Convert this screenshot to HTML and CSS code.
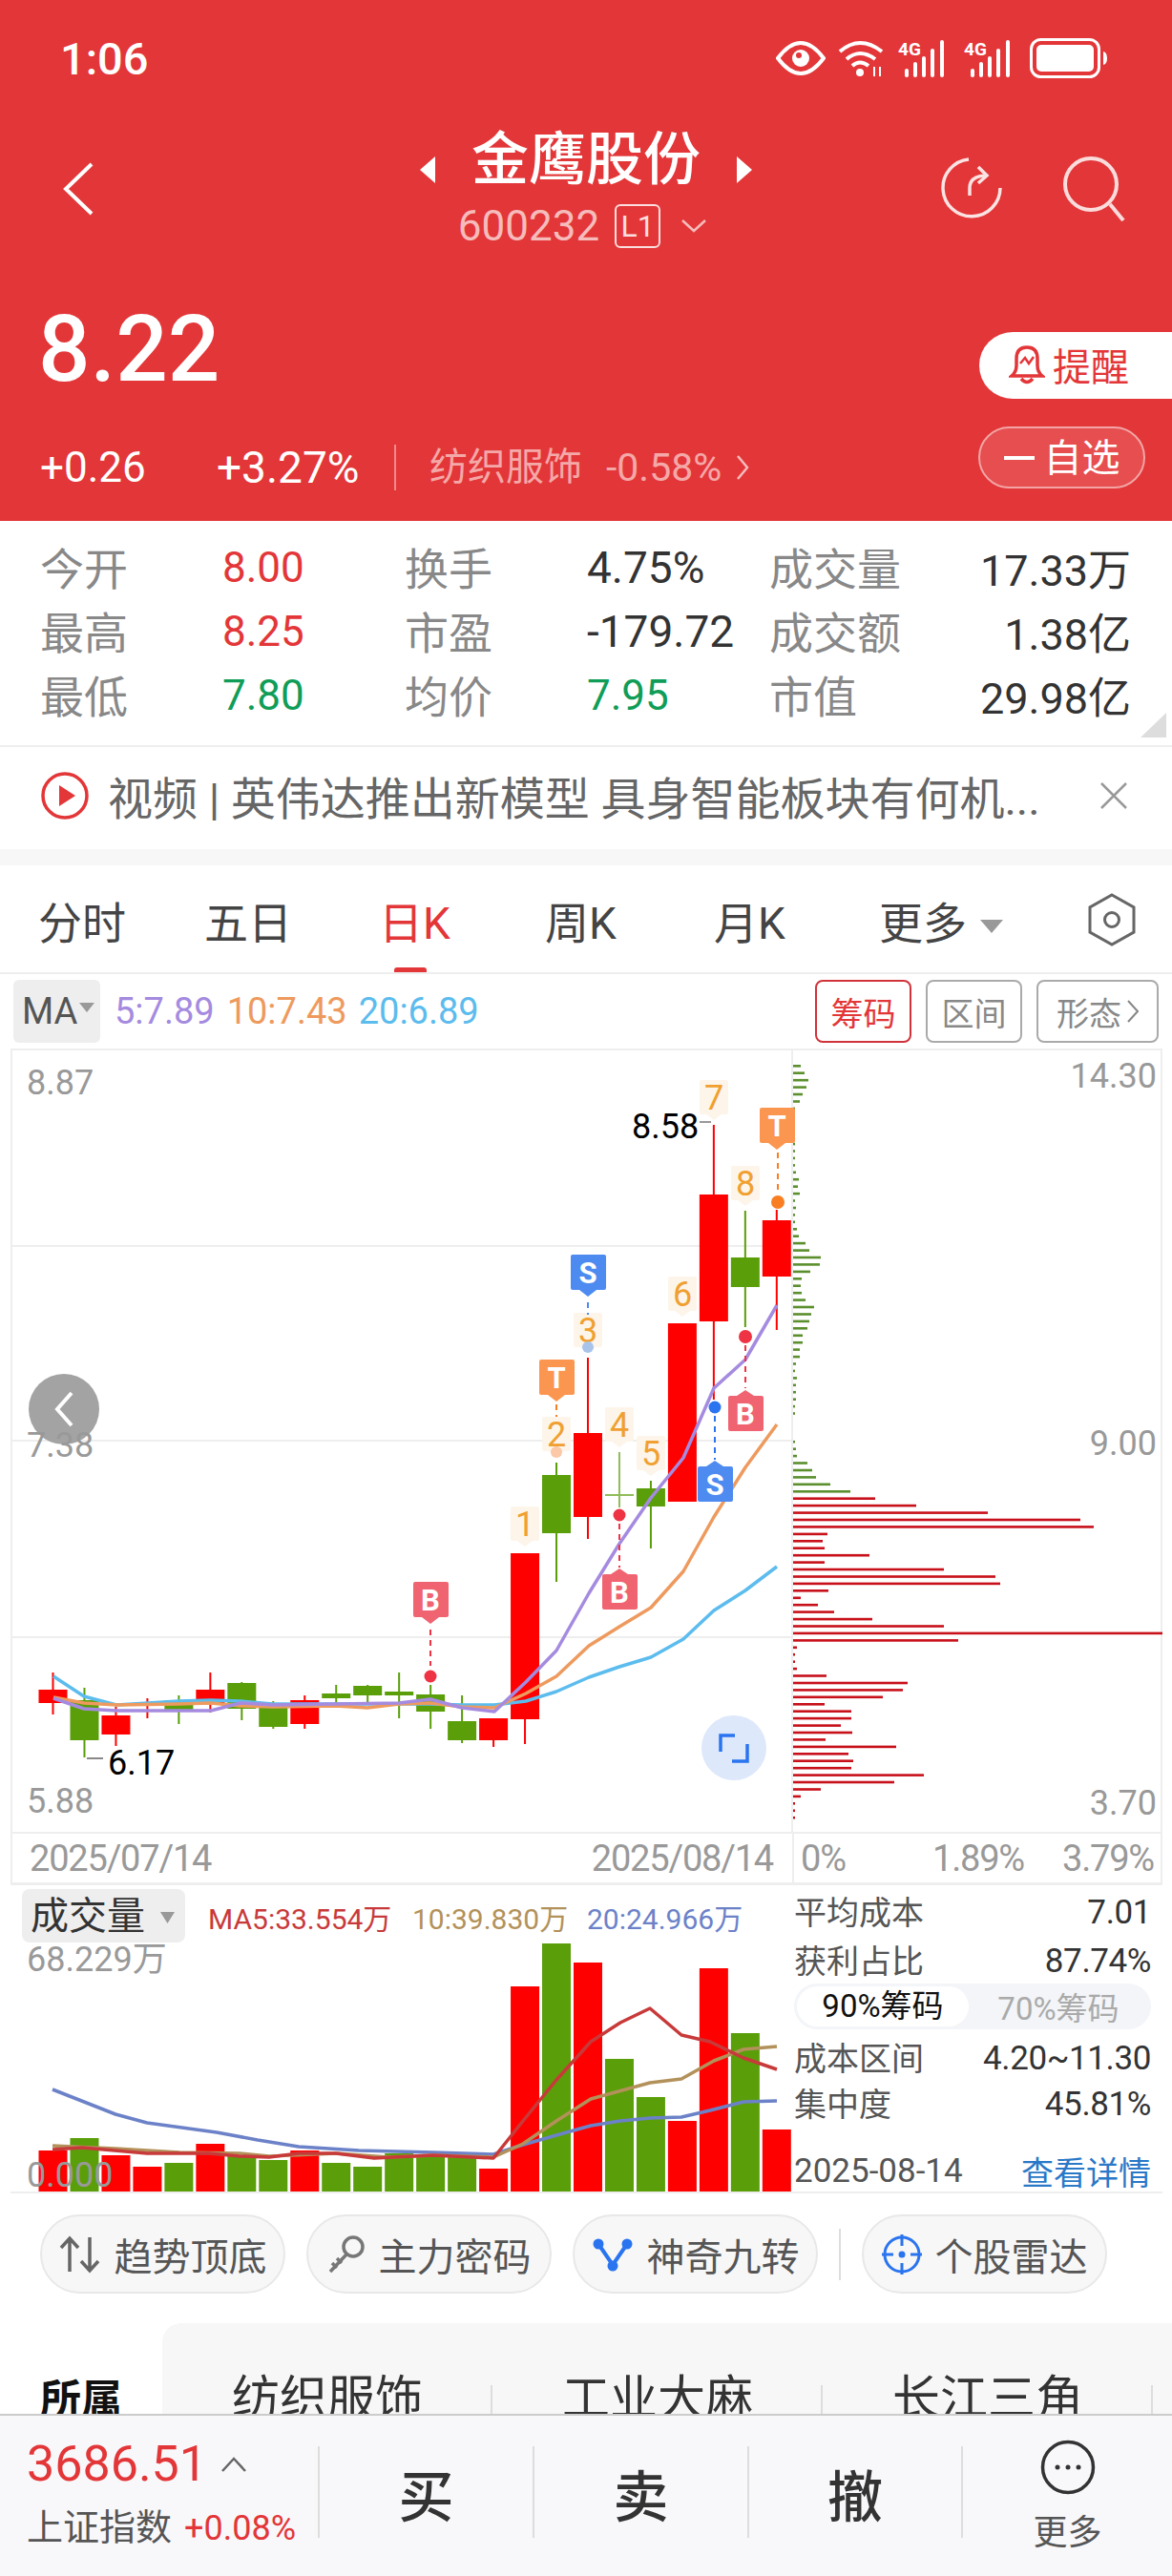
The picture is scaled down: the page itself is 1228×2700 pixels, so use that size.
FILE: index.html
```html
<!DOCTYPE html>
<html lang="zh-CN">
<head>
    <meta charset="UTF-8">
    <meta name="viewport" content="width=device-width, initial-scale=1.0">
    <title>金鹰股份 600232</title>
    <link rel="stylesheet" href="styles.css">
</head>
<body>
    <div class="page">
        <header class="top">
            <div class="status-bar">
                <span class="clock">1:06</span>
                <div class="status-icons">
                    <svg width="52" height="36" viewBox="0 0 52 36" fill="none" stroke="#fff" stroke-width="4">
                        <path d="M2 18 Q14 2 26 2 Q38 2 50 18 Q38 34 26 34 Q14 34 2 18Z"/>
                        <circle cx="26" cy="18" r="9" fill="#fff" stroke="none"/>
                        <circle cx="24" cy="15" r="3" fill="#e33638" stroke="none"/>
                    </svg>
                    <svg width="50" height="40" viewBox="0 0 50 40" fill="none" stroke="#fff" stroke-width="4">
                        <path d="M2 13 Q23 -5 46 13"/>
                        <path d="M9 21 Q23 9 39 21"/>
                        <path d="M15 28 Q23 21 32 28"/>
                        <circle cx="23" cy="35" r="4" fill="#fff" stroke="none"/>
                        <path d="M38 29 V39 M44 29 V39" stroke-width="2"/>
                    </svg>
                    <svg width="56" height="40" viewBox="0 0 56 40" fill="#fff">
                        <text class="net-label" x="0" y="17">4G</text>
                        <rect x="7" y="31" width="4" height="9" rx="2"/>
                        <rect x="16" y="24" width="4" height="16" rx="2"/>
                        <rect x="25" y="18" width="4" height="22" rx="2"/>
                        <rect x="34" y="10" width="4" height="30" rx="2"/>
                        <rect x="44" y="1" width="4" height="39" rx="2"/>
                    </svg>
                    <svg width="56" height="40" viewBox="0 0 56 40" fill="#fff">
                        <text class="net-label" x="0" y="17">4G</text>
                        <rect x="7" y="31" width="4" height="9" rx="2"/>
                        <rect x="16" y="24" width="4" height="16" rx="2"/>
                        <rect x="25" y="18" width="4" height="22" rx="2"/>
                        <rect x="34" y="10" width="4" height="30" rx="2"/>
                        <rect x="44" y="1" width="4" height="39" rx="2"/>
                    </svg>
                    <svg width="82" height="42" viewBox="0 0 82 42" fill="none">
                        <rect x="1.5" y="1.5" width="71" height="39" rx="10" stroke="#fff" stroke-width="3"/>
                        <rect x="7" y="7" width="60" height="28" rx="5" fill="#fff"/>
                        <path d="M77 14 Q81 15 81 21 Q81 27 77 28Z" fill="#fff"/>
                    </svg>
                </div>
            </div>

            <div class="title-bar">
                <div class="title-left">
                    <svg width="32" height="56" viewBox="0 0 32 56" fill="none" stroke="#fff" stroke-width="4">
                        <path d="M30 2 L3 28 L30 54"/>
                    </svg>
                </div>
                <div class="title-center">
                    <div class="name-row">
                        <svg class="name-arrow" width="20" height="30" viewBox="0 0 20 30"><path d="M18 1 V29 L2 15Z" fill="#fff"/></svg>
                        <h1 class="stock-name">金鹰股份</h1>
                        <svg class="name-arrow" width="20" height="30" viewBox="0 0 20 30"><path d="M2 1 V29 L18 15Z" fill="#fff"/></svg>
                    </div>
                    <div class="code-row">
                        <span class="stock-code">600232</span>
                        <span class="level-badge">L1</span>
                        <svg width="26" height="14" viewBox="0 0 26 14" fill="none" stroke="#f6bcbc" stroke-width="2.5"><path d="M1 1 L13 12 L25 1"/></svg>
                    </div>
                </div>
                <div class="title-right">
                    <svg width="66" height="66" viewBox="0 0 66 66" fill="none" stroke="#fbe3e3" stroke-width="3.5">
                        <path d="M30 3 A30 30 0 1 0 63 33"/>
                        <path d="M31 41 V33 Q31 21 47 20"/>
                        <path d="M40 11 L49 20 L40 28"/>
                    </svg>
                    <svg width="66" height="68" viewBox="0 0 66 68" fill="none" stroke="#fbdcdc" stroke-width="4">
                        <circle cx="30" cy="29" r="27"/>
                        <path d="M50 50 L64 67"/>
                    </svg>
                </div>
            </div>

            <div class="quote">
                <div class="quote-main">
                    <div class="price">8.22</div>
                    <div class="change-row">
                        <span class="change-abs">+0.26</span>
                        <span class="change-pct">+3.27%</span>
                        <span class="sector">纺织服饰</span>
                        <span class="sector-pct">-0.58%</span>
                        <svg width="14" height="26" viewBox="0 0 14 26" fill="none" stroke="#f6bcbc" stroke-width="2.5"><path d="M2 1 L12 13 L2 25"/></svg>
                    </div>
                </div>
                <div class="quote-actions">
                    <div class="alert-btn">
                        <svg width="38" height="42" viewBox="0 0 38 42" fill="none" stroke="#e33638" stroke-width="3.5">
                            <path d="M3 33 Q8 29 8 22 V15 Q8 3 19 3 Q30 3 30 15 V22 Q30 29 35 33Z"/>
                            <path d="M12 20 L17 14 L21 20 L26 13" stroke-width="2.5"/>
                            <path d="M13 36 Q19 43 25 36"/>
                        </svg>
                        <span>提醒</span>
                    </div>
                    <div class="watch-btn"><span class="watch-dash"></span><span class="watch-text">自选</span></div>
                </div>
            </div>
        </header>

        <section class="stats">
            <span class="stat-label">今开</span><span class="stat-value up">8.00</span>
            <span class="stat-label">换手</span><span class="stat-value">4.75%</span>
            <span class="stat-label">成交量</span><span class="stat-value end">17.33万</span>
            <span class="stat-label">最高</span><span class="stat-value up">8.25</span>
            <span class="stat-label">市盈</span><span class="stat-value">-179.72</span>
            <span class="stat-label">成交额</span><span class="stat-value end">1.38亿</span>
            <span class="stat-label">最低</span><span class="stat-value down">7.80</span>
            <span class="stat-label">均价</span><span class="stat-value down">7.95</span>
            <span class="stat-label">市值</span><span class="stat-value end">29.98亿</span>
            <span class="stats-corner"></span>
        </section>

        <section class="news">
            <svg width="50" height="50" viewBox="0 0 50 50" fill="none">
                <circle cx="25" cy="25" r="23" stroke="#e33638" stroke-width="3.5"/>
                <path d="M19 14 L36 25 L19 36Z" fill="#e33638"/>
            </svg>
            <span class="news-text">视频 | 英伟达推出新模型 具身智能板块有何机...</span>
            <svg width="30" height="30" viewBox="0 0 30 30" fill="none" stroke="#999" stroke-width="2.5"><path d="M2 2 L28 28 M28 2 L2 28"/></svg>
        </section>

        <nav class="tabs">
            <a class="tab">分时</a>
            <a class="tab">五日</a>
            <a class="tab active">日K</a>
            <a class="tab">周K</a>
            <a class="tab">月K</a>
            <a class="tab more">更多<span class="caret"></span></a>
            <svg class="tab-setting" width="50" height="56" viewBox="0 0 50 56" fill="none" stroke="#666" stroke-width="3">
                <path d="M25 2 L48 15 V41 L25 54 L2 41 V15Z"/>
                <circle cx="25" cy="28" r="7.5"/>
            </svg>
        </nav>

        <div class="ma-row">
            <div class="ma-select">MA<span class="caret small"></span></div>
            <span class="ma5">5:7.89</span>
            <span class="ma10">10:7.43</span>
            <span class="ma20">20:6.89</span>
            <div class="ma-tools">
                <span class="tool-btn on">筹码</span>
                <span class="tool-btn">区间</span>
                <span class="tool-btn wide">形态<svg width="12" height="24" viewBox="0 0 12 24" fill="none" stroke="#888" stroke-width="2"><path d="M1 1 L11 12 L1 23"/></svg></span>
            </div>
        </div>

        <section class="chart-box">
            <svg id="klineChart" class="kline" width="1205" height="819" viewBox="13 1101 1205 819"></svg>
            <div class="date-row">
                <div class="date-left"><span>2025/07/14</span><span>2025/08/14</span></div>
                <div class="date-right"><span>0%</span><span>1.89%</span><span>3.79%</span></div>
            </div>
        </section>

        <section class="volume-box">
            <svg id="volumeChart" class="volume" width="817" height="321" viewBox="13 1976 817 321"></svg>
            <div class="chip-panel">
                <div class="chip-row first"><span>平均成本</span><b>7.01</b></div>
                <div class="chip-row"><span>获利占比</span><b>87.74%</b></div>
                <div class="chip-toggle"><span class="chip-on">90%筹码</span><span class="chip-off">70%筹码</span></div>
                <div class="chip-row spaced"><span>成本区间</span><b>4.20~11.30</b></div>
                <div class="chip-row"><span>集中度</span><b>45.81%</b></div>
                <div class="chip-foot"><span>2025-08-14</span><a>查看详情</a></div>
            </div>
        </section>

        <div class="pills">
            <div class="pill">
                <svg width="44" height="40" viewBox="0 0 44 40" fill="none" stroke="#666" stroke-width="3.5"><path d="M11 38 V3 M2 13 L11 3 L20 13 M32 2 V37 M23 27 L32 37 L41 27"/></svg>
                <span>趋势顶底</span>
            </div>
            <div class="pill">
                <svg width="40" height="42" viewBox="0 0 40 42" fill="none" stroke="#777" stroke-width="3.5"><circle cx="27" cy="13" r="10"/><path d="M20 21 L3 39 M5 30 L10 35 M10 25 L15 30"/></svg>
                <span>主力密码</span>
            </div>
            <div class="pill">
                <svg width="44" height="36" viewBox="0 0 44 36" fill="none" stroke="#2a74f0" stroke-width="4"><path d="M7 7 L22 29 L37 7"/><circle cx="7" cy="7" r="5.5" fill="#2a74f0" stroke="none"/><circle cx="37" cy="7" r="5.5" fill="#2a74f0" stroke="none"/><circle cx="22" cy="30" r="5.5" fill="#2a74f0" stroke="none"/></svg>
                <span>神奇九转</span>
            </div>
            <span class="pill-divider"></span>
            <div class="pill">
                <svg width="42" height="44" viewBox="0 0 42 44" fill="none" stroke="#2a74f0" stroke-width="3"><circle cx="21" cy="22" r="18"/><path d="M21 1 V13 M21 31 V43 M0 22 H12 M30 22 H42"/><circle cx="21" cy="22" r="3.5" fill="#2a74f0" stroke="none"/></svg>
                <span>个股雷达</span>
            </div>
        </div>

        <section class="concepts">
            <div class="concept-title">所属</div>
            <div class="concept-list">
                <span class="concept">纺织服饰</span>
                <span class="concept">工业大麻</span>
                <span class="concept">长江三角</span>
            </div>
        </section>

        <footer class="bottom-bar">
            <div class="index-cell">
                <div class="index-top">
                    <span class="index-price">3686.51</span>
                    <svg width="28" height="16" viewBox="0 0 28 16" fill="none" stroke="#666" stroke-width="2.5"><path d="M2 15 L14 2 L26 15"/></svg>
                </div>
                <div class="index-bottom"><span class="index-name">上证指数</span><span class="index-pct">+0.08%</span></div>
            </div>
            <div class="trade-cell">买</div>
            <div class="trade-cell">卖</div>
            <div class="trade-cell">撤</div>
            <div class="more-cell">
                <svg width="58" height="58" viewBox="0 0 58 58" fill="none">
                    <circle cx="29" cy="29" r="26.5" stroke="#333" stroke-width="3.5"/>
                    <circle cx="18" cy="29" r="2.5" fill="#333"/><circle cx="29" cy="29" r="2.5" fill="#333"/><circle cx="40" cy="29" r="2.5" fill="#333"/>
                </svg>
                <span>更多</span>
            </div>
        </footer>
    </div>

    <script src="chart.js"></script>
</body>
</html>
```

FILE: styles.css
```css
* {
    margin: 0;
    padding: 0;
    box-sizing: border-box;
}

body {
    font-family: Roboto, "Noto Sans CJK SC", sans-serif;
    background-color: #fff;
    color: #333;
}

.page {
    width: 1228px;
    height: 2700px;
    overflow: hidden;
}

/* Red quote header */
.top {
    height: 546px;
    background-color: #e33638;
    color: #fff;
}

.status-bar {
    height: 122px;
    margin-bottom: 2px;
    display: flex;
    align-items: center;
    justify-content: space-between;
    padding: 0 67px 0 63px;
}

.clock {
    font-size: 47px;
    font-weight: 500;
}

.status-icons {
    display: flex;
    align-items: center;
    gap: 13px;
}

.net-label {
    font-family: Roboto, sans-serif;
    font-size: 19px;
    font-weight: 700;
    fill: #fff;
}

.title-bar {
    height: 146px;
    display: grid;
    grid-template-columns: 1fr auto 1fr;
}

.title-left {
    padding: 46px 0 0 66px;
}

.title-center {
    display: flex;
    flex-direction: column;
    align-items: center;
}

.name-row {
    height: 88px;
    display: flex;
    align-items: center;
    gap: 36px;
}

.name-arrow {
    margin-top: 20px;
}

.stock-name {
    font-size: 60px;
    font-weight: 500;
    line-height: 88px;
}

.code-row {
    height: 50px;
    display: flex;
    align-items: center;
    padding-right: 8px;
    color: #f6bcbc;
}

.stock-code {
    font-size: 44px;
    margin-right: 16px;
}

.level-badge {
    width: 48px;
    height: 46px;
    line-height: 42px;
    text-align: center;
    font-size: 32px;
    color: #fbdede;
    border: 2px solid #fbdede;
    border-radius: 6px;
    margin-right: 22px;
}

.title-right {
    display: flex;
    justify-content: flex-end;
    align-items: flex-start;
    gap: 62px;
    padding: 40px 49px 0 0;
}

.quote {
    height: 276px;
    display: flex;
    justify-content: space-between;
}

.quote-main {
    padding: 46px 0 0 40px;
}

.price {
    font-size: 96px;
    font-weight: 500;
    line-height: 100px;
}

.change-row {
    height: 52px;
    margin-top: 48px;
    padding-left: 2px;
    display: flex;
    align-items: center;
}

.change-abs {
    width: 185px;
    font-size: 44px;
}

.change-pct {
    width: 186px;
    font-size: 46px;
}

.sector {
    height: 48px;
    line-height: 48px;
    padding-left: 35px;
    border-left: 2px solid #ef8a8a;
    font-size: 40px;
    color: #f4a8a8;
}

.sector-pct {
    margin: 0 15px 0 25px;
    font-size: 41px;
    color: #f4a8a8;
}

.quote-actions {
    display: flex;
    flex-direction: column;
    align-items: flex-end;
    padding-top: 78px;
}

.alert-btn {
    width: 202px;
    height: 70px;
    display: flex;
    align-items: center;
    gap: 8px;
    padding: 0 0 2px 31px;
    background-color: #fff;
    border-radius: 35px 0 0 35px;
    font-size: 40px;
    color: #e33638;
}

.watch-btn {
    width: 175px;
    height: 65px;
    margin: 29px 28px 0 0;
    display: flex;
    align-items: center;
    justify-content: center;
    gap: 10px;
    background-color: rgba(255, 255, 255, 0.12);
    border: 2px solid #f3a5a5;
    border-radius: 33px;
    font-size: 40px;
}

.watch-text {
    margin-bottom: 5px;
}

.watch-dash {
    width: 32px;
    height: 4px;
    background-color: #fff;
}

/* Stat table */
.stats {
    position: relative;
    height: 237px;
    padding: 15px 43px 0 42px;
    display: grid;
    grid-template-columns: 191px 191px 191px 191px 191px 1fr;
    grid-template-rows: repeat(3, 67px);
    align-items: center;
    border-bottom: 2px solid #eee;
}

.stat-label {
    margin-bottom: 3px;
    font-size: 46px;
    color: #888;
}

.stat-value {
    font-size: 46px;
    color: #333;
}

.stat-value.up {
    font-size: 44px;
    color: #e33638;
}

.stat-value.down {
    font-size: 44px;
    color: #0f9d58;
}

.stat-value.end {
    font-size: 45px;
    text-align: right;
}

.stats-corner {
    position: absolute;
    right: 6px;
    bottom: 8px;
    border-left: 27px solid transparent;
    border-bottom: 26px solid #ddd;
}

/* News strip */
.news {
    height: 107px;
    display: flex;
    align-items: center;
    padding: 0 46px 6px 43px;
}

.news-text {
    flex: 1;
    margin-left: 20px;
    font-size: 47px;
    color: #666;
    white-space: nowrap;
}

/* Period tabs */
.tabs {
    height: 131px;
    display: grid;
    grid-template-columns: 174px 183px 174px 177px 173px 219px 1fr;
    align-items: center;
    padding: 1px 0 0 40px;
    background-color: #fff;
    border-top: 17px solid #f7f7f7;
    border-bottom: 2px solid #eee;
}

.tab {
    position: relative;
    font-size: 46px;
    color: #444;
}

.tab.active {
    color: #e33638;
}

.tab.active::after {
    content: "";
    position: absolute;
    left: 16px;
    bottom: -22px;
    width: 34px;
    height: 5px;
    background-color: #e33638;
    border-radius: 3px 3px 0 0;
}

.caret {
    display: inline-block;
    margin-left: 14px;
    vertical-align: middle;
    border-left: 12px solid transparent;
    border-right: 12px solid transparent;
    border-top: 14px solid #999;
}

.caret.small {
    margin-left: 2px;
    vertical-align: 12px;
    border-left-width: 8px;
    border-right-width: 8px;
    border-top-width: 10px;
}

/* MA legend */
.ma-row {
    height: 78px;
    display: flex;
    align-items: center;
    padding: 0 14px 0 14px;
    font-size: 38px;
}

.ma-select {
    width: 91px;
    height: 66px;
    line-height: 66px;
    padding-left: 9px;
    background-color: #eee;
    border-radius: 6px;
    color: #555;
    margin-right: 15px;
    white-space: nowrap;
}

.ma5 {
    color: #a58be0;
    margin-right: 13px;
}

.ma10 {
    color: #ee9a5e;
    margin-right: 12px;
}

.ma20 {
    color: #5cbcee;
}

.ma-tools {
    margin-left: auto;
    display: flex;
    gap: 15px;
}

.tool-btn {
    width: 101px;
    height: 66px;
    display: flex;
    align-items: center;
    justify-content: center;
    gap: 6px;
    border: 2px solid #aaa;
    border-radius: 8px;
    font-size: 34px;
    color: #888;
}

.tool-btn.on {
    border-color: #d0333a;
    color: #e33638;
}

.tool-btn.wide {
    width: 128px;
}

/* Candle chart */
.chart-box {
    margin: 0 10px 0 11px;
    border: 2px solid #eee;
    border-bottom: 3px solid #eee;
}

.kline,
.volume {
    display: block;
}

.axis-text {
    font-family: Roboto, "Noto Sans CJK SC", sans-serif;
    font-size: 36px;
    fill: #999;
}

.end-text {
    text-anchor: end;
}

.price-mark {
    font-family: Roboto, sans-serif;
    font-size: 36px;
    fill: #000;
}

.seq-text {
    font-family: Roboto, sans-serif;
    font-size: 36px;
    fill: #f0a030;
    text-anchor: middle;
}

.tag-text {
    font-family: Roboto, sans-serif;
    font-size: 31px;
    font-weight: 700;
    fill: #fff;
    text-anchor: middle;
}

.date-row {
    height: 53px;
    display: grid;
    grid-template-columns: 817px 1fr;
    align-items: center;
    border-top: 2px solid #eee;
    font-size: 38px;
    letter-spacing: -1.2px;
    color: #999;
}

.date-left {
    height: 100%;
    display: flex;
    align-items: center;
    justify-content: space-between;
    padding: 0 20px 0 18px;
}

.date-right {
    height: 100%;
    display: grid;
    grid-template-columns: 138px 136px auto;
    align-items: center;
    padding-left: 7px;
    border-left: 2px solid #eee;
}

/* Volume chart */
.volume-box {
    margin: 0 10px 0 11px;
    padding-left: 2px;
    height: 323px;
    display: grid;
    grid-template-columns: 817px 1fr;
    border-bottom: 2px solid #eee;
    align-items: start;
}

.vol-title {
    font-family: "Noto Sans CJK SC", sans-serif;
    font-size: 40px;
    fill: #333;
}

.vol-ma {
    font-family: Roboto, "Noto Sans CJK SC", sans-serif;
    font-size: 30px;
}

.chip-panel {
    height: 321px;
    display: flex;
    flex-direction: column;
    padding: 5px 12px 0 2px;
    font-size: 34px;
    color: #555;
}

.chip-row {
    height: 48px;
    flex: none;
    display: flex;
    align-items: center;
    justify-content: space-between;
}

.chip-row.first {
    height: 50px;
    padding-bottom: 4px;
}

.chip-row span {
    margin-bottom: 3px;
}

.chip-row b {
    font-weight: 400;
    font-size: 35px;
    letter-spacing: -0.4px;
    color: #333;
}

.chip-row.spaced {
    margin-top: 6px;
}

.chip-toggle {
    height: 48px;
    flex: none;
    display: flex;
    align-items: center;
    padding: 3px;
    background-color: #f3f5f8;
    border-radius: 24px;
    font-size: 33px;
}

.chip-on {
    width: 180px;
    height: 42px;
    line-height: 42px;
    text-align: center;
    background-color: #fff;
    border-radius: 21px;
    color: #111;
}

.chip-off {
    flex: 1;
    text-align: center;
    color: #aaa;
}

.chip-foot {
    height: 44px;
    margin-top: auto;
    display: flex;
    align-items: center;
    justify-content: space-between;
    font-size: 35px;
}

.chip-foot a {
    font-size: 34px;
    color: #2a78c8;
}

/* Feature pills */
.pills {
    height: 136px;
    display: flex;
    align-items: flex-start;
    gap: 22px;
    padding: 22px 0 0 42px;
}

.pill {
    width: 257px;
    height: 83px;
    display: flex;
    align-items: center;
    justify-content: center;
    gap: 14px;
    background-color: #f7f7f7;
    border: 2px solid #e8e8e8;
    border-radius: 42px;
    font-size: 40px;
    color: #555;
}

.pill-divider {
    width: 2px;
    height: 54px;
    margin-top: 15px;
    background-color: #ddd;
}

/* Related sectors, cut by the bottom bar */
.concepts {
    height: 95px;
    display: flex;
    overflow: hidden;
}

.concept-title {
    width: 170px;
    padding: 45px 0 0 42px;
    font-size: 43px;
    font-weight: 700;
    color: #111;
}

.concept-list {
    flex: 1;
    display: flex;
    background-color: #f7f7f8;
    border-radius: 20px 0 0 0;
}

.concept {
    position: relative;
    width: 346px;
    padding-top: 38px;
    text-align: center;
    font-size: 50px;
    color: #333;
}

.concept::after {
    content: "";
    position: absolute;
    right: 0;
    bottom: 0;
    width: 2px;
    height: 30px;
    background-color: #ddd;
}

/* Bottom trade bar */
.bottom-bar {
    height: 170px;
    display: grid;
    grid-template-columns: 333px 225px 225px 224px 1fr;
    align-items: center;
    padding-bottom: 8px;
    background-color: #f8f8fb;
    border-top: 2px solid #ccc;
}

.index-cell {
    padding-left: 28px;
}

.index-top {
    display: flex;
    align-items: center;
    gap: 14px;
    height: 62px;
}

.index-price {
    font-size: 52px;
    color: #e33638;
}

.index-bottom {
    display: flex;
    align-items: baseline;
    gap: 13px;
    margin-top: 4px;
}

.index-name {
    font-size: 38px;
    color: #555;
}

.index-pct {
    font-size: 36px;
    color: #e33638;
}

.trade-cell {
    height: 96px;
    line-height: 108px;
    text-align: center;
    border-left: 2px solid #ddd;
    font-size: 58px;
    font-weight: 500;
    color: #333;
}

.more-cell {
    height: 96px;
    border-left: 2px solid #ddd;
    display: flex;
    flex-direction: column;
    align-items: center;
    font-size: 36px;
    color: #555;
}

.more-cell svg {
    flex: none;
    margin-top: -7px;
}

.more-cell span {
    margin-top: 18px;
    line-height: 44px;
}
```

FILE: chart.js
```js
const RED = '#ff0000';
const GREEN = '#5a9e0a';

function candleX(i) {
    return 55.5 + i * 32.97;
}

function polyline(points, color, width) {
    const pts = points.map(p => p.join(',')).join(' ');
    return `<polyline points="${pts}" fill="none" stroke="${color}" stroke-width="${width}" stroke-linejoin="round"/>`;
}

function dashed(x, y1, y2, color) {
    return `<line x1="${x}" y1="${y1}" x2="${x}" y2="${y2}" stroke="${color}" stroke-width="2" stroke-dasharray="6 5"/>`;
}

function dot(x, y, r, color) {
    return `<circle cx="${x}" cy="${y}" r="${r}" fill="${color}"/>`;
}

// T / S / B flag, tip points down (dir 1) or up (dir -1)
function flag(x, top, letter, color, dir) {
    const tip = dir > 0
        ? `M${x - 9} ${top + 37} L${x} ${top + 44} L${x + 9} ${top + 37}Z`
        : `M${x - 9} ${top} L${x} ${top - 6} L${x + 9} ${top}Z`;
    return `<rect x="${x - 18}" y="${top}" width="37" height="37" rx="2" fill="${color}"/>` +
        `<path d="${tip}" fill="${color}"/>` +
        `<text class="tag-text" x="${x}" y="${top + 30}">${letter}</text>`;
}

// orange sequence number on a pale bubble
function seq(x, top, label) {
    return `<rect x="${x - 15}" y="${top}" width="30" height="36" rx="2" fill="#fdf5ea"/>` +
        `<path d="M${x - 8} ${top + 36} L${x} ${top + 42} L${x + 8} ${top + 36}Z" fill="#fdf5ea"/>` +
        `<text class="seq-text" x="${x}" y="${top + 31}">${label}</text>`;
}

// top, bottom, wick top, wick bottom, colour
const candles = [
    [1771, 1785, 1753, 1797, RED],
    [1782, 1824, 1769, 1842, GREEN],
    [1798, 1818, 1789, 1830, RED],
    [1785, 1787, 1780, 1801, RED],
    [1782, 1792, 1777, 1807, GREEN],
    [1771, 1785, 1753, 1795, RED],
    [1764, 1791, 1763, 1803, GREEN],
    [1785, 1810, 1783, 1812, GREEN],
    [1782, 1807, 1777, 1812, RED],
    [1775, 1780, 1766, 1786, GREEN],
    [1767, 1777, 1766, 1786, GREEN],
    [1773, 1777, 1753, 1801, GREEN],
    [1776, 1794, 1766, 1812, GREEN],
    [1804, 1824, 1777, 1827, GREEN],
    [1801, 1824, 1801, 1831, RED],
    [1628, 1802, 1628, 1828, RED],
    [1546, 1607, 1533, 1658, GREEN],
    [1502, 1590, 1423, 1613, RED],
    [1566, 1568, 1522, 1580, '#8fbc5a'],
    [1560, 1579, 1552, 1623, GREEN],
    [1387, 1574, 1387, 1574, RED],
    [1252, 1385, 1179, 1467, RED],
    [1318, 1349, 1269, 1391, GREEN],
    [1279, 1338, 1268, 1394, RED]
];

const ma5 = [[56, 1780], [88, 1791], [122, 1793], [187, 1793], [221, 1793], [252, 1785], [286, 1787], [352, 1786], [418, 1785], [451, 1781], [484, 1790], [518, 1794], [551, 1763], [583, 1730], [617, 1670], [649, 1618], [682, 1570], [716, 1528], [748, 1455], [781, 1425], [814, 1368]];
const ma10 = [[56, 1779], [88, 1785], [122, 1787], [187, 1786], [221, 1785], [252, 1788], [286, 1789], [352, 1788], [385, 1790], [418, 1786], [451, 1785], [484, 1789], [518, 1790], [551, 1775], [583, 1757], [617, 1725], [649, 1705], [682, 1685], [716, 1647], [748, 1590], [781, 1538], [814, 1493]];
const ma20 = [[56, 1757], [88, 1778], [122, 1787], [155, 1785], [187, 1783], [221, 1782], [252, 1783], [286, 1786], [352, 1786], [418, 1786], [451, 1786], [484, 1787], [518, 1787], [551, 1783], [583, 1773], [617, 1758], [649, 1747], [682, 1737], [716, 1718], [748, 1688], [781, 1667], [814, 1642]];

const chipGreen = [8, 12, 16, 14, 10, 7, 2, 2, 2, 2, 2, 2, 2, 2, 2, 3, 6, 5, 7, 2, 3, 2, 2, 4, 6, 13, 17, 29, 28, 18, 9, 8, 9, 13, 22, 19, 17, 15, 10, 10, 7, 7, 3, 2, 4, 3, 3, 3, 2, 2, 0, 0, 0, 2, 3, 4, 15, 20, 24, 39, 60];
const chipRed = [86, 129, 204, 301, 315, 36, 31, 33, 80, 33, 158, 212, 217, 37, 8, 26, 43, 83, 158, 389, 173, 4, 2, 2, 4, 35, 120, 115, 94, 33, 61, 61, 50, 62, 34, 108, 58, 63, 61, 137, 106, 29, 8, 2, 2, 2];

function drawKline() {
    let s = '';

    [1306, 1510, 1716].forEach(y => {
        s += `<rect x="13" y="${y - 1}" width="817" height="2" fill="#eee"/>`;
    });
    s += '<rect x="829" y="1101" width="2" height="819" fill="#eee"/>';

    s += '<text class="axis-text" x="28" y="1147">8.87</text>';
    s += '<text class="axis-text" x="28" y="1900">5.88</text>';
    s += '<text class="axis-text end-text" x="1212" y="1140">14.30</text>';
    s += '<text class="axis-text end-text" x="1212" y="1525">9.00</text>';
    s += '<text class="axis-text end-text" x="1212" y="1902">3.70</text>';

    chipGreen.forEach((len, i) => {
        if (len) s += `<rect x="831" y="${(1116 + i * 7.433).toFixed(1)}" width="${len}" height="2.6" fill="#5b8f2e"/>`;
    });
    chipRed.forEach((len, i) => {
        s += `<rect x="831" y="${(1116 + (i + 61) * 7.433).toFixed(1)}" width="${len}" height="2.6" fill="#c8101a"/>`;
    });

    candles.forEach((c, i) => {
        const x = candleX(i);
        s += `<rect x="${x - 1}" y="${c[2]}" width="2" height="${c[3] - c[2]}" fill="${c[4]}"/>`;
        s += `<rect x="${x - 15}" y="${c[0]}" width="30" height="${c[1] - c[0]}" fill="${c[4]}"/>`;
    });

    s += polyline(ma20, '#5cbcee', 3.5);
    s += polyline(ma10, '#ee9a5e', 3.5);
    s += polyline(ma5, '#a58be0', 3.5);

    // round buttons over the chart
    s += '<circle cx="67" cy="1477" r="37" fill="#a3a3a3"/>';
    s += '<path d="M75 1460 L60 1477 L75 1494" fill="none" stroke="#fff" stroke-width="4"/>';
    s += '<text class="axis-text" x="28" y="1527">7.38</text>';
    s += '<circle cx="769" cy="1832" r="34" fill="#dde8fb"/>';
    s += '<path d="M755 1836 V1819 H770 M783 1828 V1846 H767" fill="none" stroke="#2a74f0" stroke-width="3.5"/>';

    // price marks
    s += '<text class="price-mark" x="662" y="1193">8.58</text>';
    s += '<rect x="733" y="1175" width="12" height="2" fill="#999"/>';
    s += '<text class="price-mark" x="113" y="1860">6.17</text>';
    s += '<rect x="91" y="1842" width="17" height="2" fill="#888"/>';

    // sequence numbers
    s += seq(748, 1132, '7');
    s += seq(781, 1222, '8');
    s += seq(715, 1338, '6');
    s += seq(616, 1376, '3');
    s += seq(583, 1485, '2');
    s += seq(649, 1475, '4');
    s += seq(682, 1505, '5');
    s += seq(550, 1579, '1');

    // buy / sell flags
    s += flag(814, 1161, 'T', '#fb9650', 1);
    s += dashed(815, 1208, 1250, '#f97e22') + dot(815, 1260, 7, '#f97e22');
    s += flag(616, 1315, 'S', '#4d8bf0', 1);
    s += dashed(616, 1365, 1378, '#4d8bf0') + dot(616, 1412, 6, '#a9c4ea');
    s += flag(583, 1425, 'T', '#fb9650', 1);
    s += dashed(583, 1472, 1485, '#f97e22') + dot(583, 1522, 6, '#fbc8a8');
    s += flag(781, 1463, 'B', '#f06472', -1);
    s += dashed(781, 1410, 1455, '#ee3344') + dot(781, 1401, 7, '#ee3344');
    s += flag(749, 1537, 'S', '#4d8bf0', -1);
    s += dashed(749, 1484, 1530, '#2a74f0') + dot(749, 1475, 6.5, '#2a74f0');
    s += flag(649, 1650, 'B', '#f06472', -1);
    s += dashed(649, 1597, 1643, '#ee3344') + dot(649, 1588, 6.5, '#ee3344');
    s += flag(451, 1658, 'B', '#f06472', 1);
    s += dashed(451, 1708, 1746, '#ee3344') + dot(451, 1757, 6.5, '#ee3344');

    document.getElementById('klineChart').innerHTML = s;
}

const volumes = [
    [2254, RED], [2241, GREEN], [2259, RED], [2271, RED], [2267, GREEN], [2247, RED],
    [2260, GREEN], [2264, GREEN], [2254, RED], [2267, GREEN], [2271, GREEN], [2257, GREEN],
    [2258, GREEN], [2258, GREEN], [2273, RED], [2082, RED], [2037, GREEN], [2057, RED],
    [2158, GREEN], [2198, GREEN], [2223, RED], [2063, RED], [2131, GREEN], [2232, RED]
];

const volMa5 = [[55, 2253], [86, 2251], [154, 2257], [219, 2257], [251, 2260], [282, 2261], [313, 2257], [352, 2257], [392, 2262], [454, 2259], [517, 2262], [548, 2223], [583, 2180], [619, 2140], [650, 2120], [681, 2105], [714, 2133], [744, 2140], [779, 2157], [814, 2169]];
const volMa10 = [[55, 2249], [121, 2252], [188, 2256], [251, 2257], [282, 2260], [352, 2257], [407, 2261], [454, 2259], [517, 2261], [548, 2247], [583, 2223], [619, 2200], [681, 2183], [714, 2179], [748, 2160], [779, 2148], [814, 2145]];
const volMa20 = [[55, 2190], [121, 2216], [154, 2225], [227, 2235], [270, 2243], [313, 2250], [376, 2254], [454, 2256], [517, 2258], [548, 2248], [583, 2238], [619, 2228], [650, 2223], [681, 2220], [714, 2219], [744, 2212], [779, 2203], [814, 2202]];

function drawVolume() {
    let s = '';

    volumes.forEach((v, i) => {
        s += `<rect x="${candleX(i) - 15}" y="${v[0]}" width="30" height="${2297 - v[0]}" fill="${v[1]}"/>`;
    });

    s += polyline(volMa20, '#6c82c8', 3.5);
    s += polyline(volMa10, '#b3915a', 3.5);
    s += polyline(volMa5, '#c83a3a', 3.5);

    s += '<rect x="23" y="1980" width="171" height="56" rx="8" fill="#eee"/>';
    s += '<text class="vol-title" x="32" y="2022">成交量</text>';
    s += '<path d="M168 2004 H183 L175.5 2016Z" fill="#999"/>';
    s += '<text class="vol-ma" x="218" y="2022" fill="#c83a3a">MA5:33.554万</text>';
    s += '<text class="vol-ma" x="432" y="2022" fill="#b3915a">10:39.830万</text>';
    s += '<text class="vol-ma" x="615" y="2022" fill="#6c82c8">20:24.966万</text>';
    s += '<text class="axis-text" x="28" y="2066">68.229万</text>';
    s += '<text class="axis-text" x="28" y="2292">0.000</text>';

    document.getElementById('volumeChart').innerHTML = s;
}

drawKline();
drawVolume();
```
